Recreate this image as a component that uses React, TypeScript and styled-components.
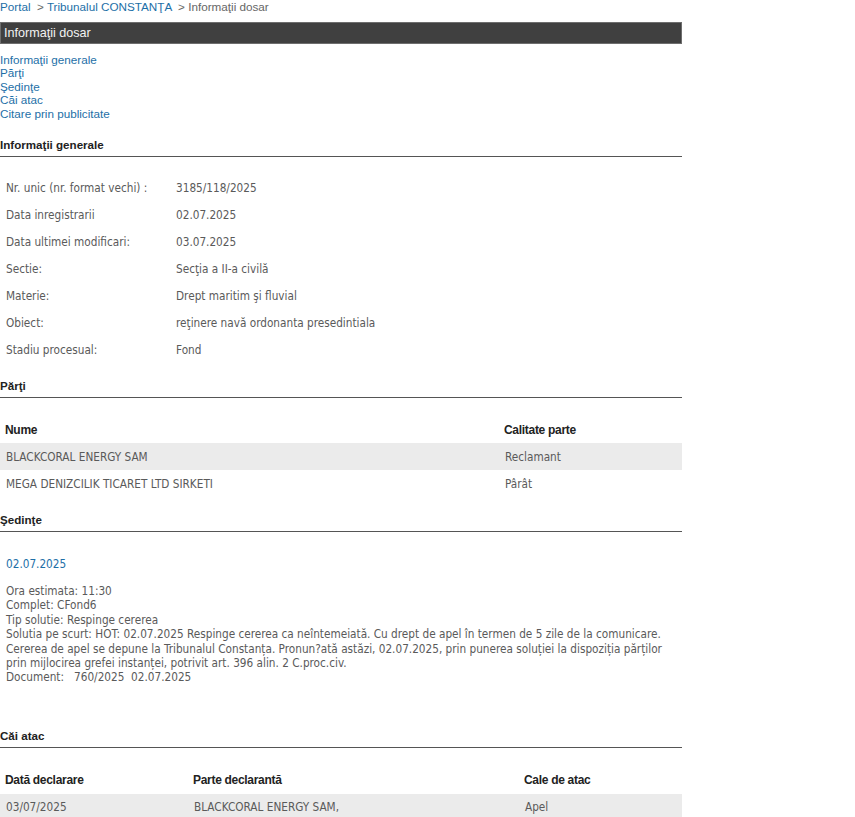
import React from "react";
import styled, { createGlobalStyle } from "styled-components";

const Global = createGlobalStyle`
  html, body { margin: 0; padding: 0; background: #fff; }
  body { font-family: "Liberation Sans", Arial, sans-serif; }
`;

const bodyFont = `"DejaVu Sans Condensed", "DejaVu Sans", sans-serif`;

const Page = styled.div`
  width: 682px;
  display: flex;
  flex-direction: column;
`;

const Crumbs = styled.div`
  font-size: 11.7px;
  line-height: 14px;
  height: 22px;
  color: #666;
  white-space: pre;
`;

const CrumbLink = styled.a`
  color: #1d6fa7;
  text-decoration: none;
`;

const TitleBar = styled.div`
  height: 20px;
  background: #404040;
  border: 1px solid #6e6e6e;
  color: #f2f2f2;
  font-size: 12.6px;
  line-height: 20px;
  padding-left: 3px;
`;

const NavList = styled.div`
  display: flex;
  flex-direction: column;
  margin-top: 9px;
`;

const NavLink = styled.a`
  color: #1d6fa7;
  font-size: 11.7px;
  line-height: 13.4px;
  text-decoration: none;
`;

const SectionTitle = styled.div<{ $top: number }>`
  margin-top: ${(p) => p.$top}px;
  font-size: 11.6px;
  font-weight: bold;
  color: #222;
  line-height: 14px;
  padding-bottom: 4px;
  border-bottom: 1px solid #555;
`;

const InfoTable = styled.div<{ $top: number }>`
  margin-top: ${(p) => p.$top}px;
  display: grid;
  grid-template-columns: 176px 1fr;
  grid-auto-rows: 27px;
  font-family: ${bodyFont};
  font-size: 11.7px;
  color: #5a5a5a;
  align-items: center;
`;

const Label = styled.div`
  padding-left: 6px;
`;

const DataTable = styled.div<{ $top: number; $cols: string }>`
  margin-top: ${(p) => p.$top}px;
  display: grid;
  grid-template-columns: ${(p) => p.$cols};
`;

const Row = styled.div<{ $shade?: boolean }>`
  display: contents;
  & > div {
    background: ${(p) => (p.$shade ? "#ebebeb" : "transparent")};
  }
`;

const HeadCell = styled.div`
  height: 27px;
  display: flex;
  align-items: center;
  padding-left: 5px;
  font-size: 12px;
  font-weight: bold;
  color: #222;
  letter-spacing: -0.3px;
`;

const Cell = styled.div`
  height: 27px;
  display: flex;
  align-items: center;
  padding-left: 6px;
  font-family: ${bodyFont};
  font-size: 11.7px;
  color: #5a5a5a;
`;

const Hearing = styled.div`
  padding-left: 6px;
  font-family: ${bodyFont};
  font-size: 11.7px;
  color: #5a5a5a;
`;

const HearingDate = styled.div`
  color: #1d6fa7;
  margin-top: 25px;
  line-height: 14px;
`;

const HearingBody = styled.div`
  margin-top: 13px;
  line-height: 14.4px;
  white-space: pre-wrap;
`;

const info: [string, string][] = [
  ["Nr. unic (nr. format vechi) :", "3185/118/2025"],
  ["Data inregistrarii", "02.07.2025"],
  ["Data ultimei modificari:", "03.07.2025"],
  ["Sectie:", "Secţia a II-a civilă"],
  ["Materie:", "Drept maritim şi fluvial"],
  ["Obiect:", "reţinere navă ordonanta presedintiala"],
  ["Stadiu procesual:", "Fond"],
];

export default function App() {
  return (
    <>
      <Global />
      <Page>
        <Crumbs>
          <CrumbLink href="#">Portal</CrumbLink>{"  > "}
          <CrumbLink href="#">Tribunalul CONSTANŢA</CrumbLink>{"  > Informaţii dosar"}
        </Crumbs>
        <TitleBar>Informaţii dosar</TitleBar>
        <NavList>
          <NavLink href="#">Informaţii generale</NavLink>
          <NavLink href="#">Părţi</NavLink>
          <NavLink href="#">Şedinţe</NavLink>
          <NavLink href="#">Căi atac</NavLink>
          <NavLink href="#">Citare prin publicitate</NavLink>
        </NavList>

        <SectionTitle $top={18}>Informaţii generale</SectionTitle>
        <InfoTable $top={17}>
          {info.map(([k, v]) => (
            <React.Fragment key={k}>
              <Label>{k}</Label>
              <div>{v}</div>
            </React.Fragment>
          ))}
        </InfoTable>

        <SectionTitle $top={16}>Părţi</SectionTitle>
        <DataTable $top={18} $cols="499px 1fr">
          <Row>
            <HeadCell>Nume</HeadCell>
            <HeadCell>Calitate parte</HeadCell>
          </Row>
          <Row $shade>
            <Cell>BLACKCORAL ENERGY SAM</Cell>
            <Cell>Reclamant</Cell>
          </Row>
          <Row>
            <Cell>MEGA DENIZCILIK TICARET LTD SIRKETI</Cell>
            <Cell>Pârât</Cell>
          </Row>
        </DataTable>

        <SectionTitle $top={16}>Şedinţe</SectionTitle>
        <Hearing>
          <HearingDate>02.07.2025</HearingDate>
          <HearingBody>
            {`Ora estimata: 11:30
Complet: CFond6
Tip solutie: Respinge cererea
Solutia pe scurt: HOT: 02.07.2025 Respinge cererea ca neîntemeiată. Cu drept de apel în termen de 5 zile de la comunicare. Cererea de apel se depune la Tribunalul Constanța. Pronun?ată astăzi, 02.07.2025, prin punerea soluției la dispoziția părților prin mijlocirea grefei instanței, potrivit art. 396 alin. 2 C.proc.civ.
Document:   760/2025  02.07.2025`}
          </HearingBody>
        </Hearing>

        <SectionTitle $top={44}>Căi atac</SectionTitle>
        <DataTable $top={19} $cols="188px 331px 1fr">
          <Row>
            <HeadCell>Dată declarare</HeadCell>
            <HeadCell>Parte declarantă</HeadCell>
            <HeadCell>Cale de atac</HeadCell>
          </Row>
          <Row $shade>
            <Cell>03/07/2025</Cell>
            <Cell>BLACKCORAL ENERGY SAM,</Cell>
            <Cell>Apel</Cell>
          </Row>
        </DataTable>
      </Page>
    </>
  );
}
